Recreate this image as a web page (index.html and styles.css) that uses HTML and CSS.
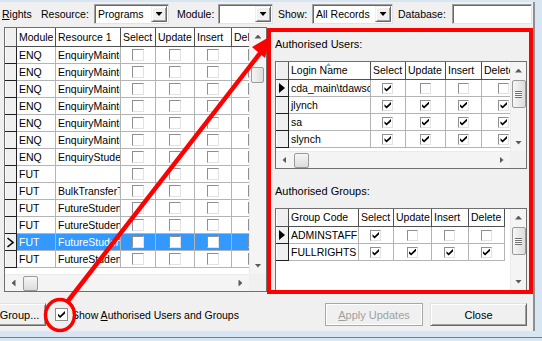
FILE: index.html
```html
<!DOCTYPE html>
<html>
<head>
<meta charset="utf-8">
<title>Rights</title>
<link rel="stylesheet" href="styles.css">
</head>
<body>
<div class="window">
  <div class="toolbar">
    <span class="lbl w-rights"><u>R</u>ights</span>
    <span class="lbl w-res">Resource:</span>
    <div class="combo w-prog"><span class="ctext">Programs</span><span class="cbtn"></span></div>
    <span class="lbl w-mod">Module:</span>
    <div class="combo w-modc"><span class="ctext"></span><span class="cbtn"></span></div>
    <span class="lbl w-show">Show:</span>
    <div class="combo w-showc"><span class="ctext">All Records</span><span class="cbtn"></span></div>
    <span class="lbl w-db">Database:</span>
    <div class="textbox w-dbt"></div>
  </div>

  <div class="main">
    <div class="grid lgrid">
      <div class="gbody">
        <div class="gtable">
          <div class="grow ghead lh lcols"><div class="c sel"></div><div class="c">Module</div><div class="c">Resource 1</div><div class="c">Select</div><div class="c">Update</div><div class="c">Insert</div><div class="c">Delete</div></div>
          <div class="grow lcols"><div class="c sel"></div><div class="c">ENQ</div><div class="c">EnquiryMaintenance</div><div class="c ck"><i class="cb"></i></div><div class="c ck"><i class="cb"></i></div><div class="c ck"><i class="cb"></i></div><div class="c ck"><i class="cb"></i></div></div>
          <div class="grow lcols"><div class="c sel"></div><div class="c">ENQ</div><div class="c">EnquiryMaintenance</div><div class="c ck"><i class="cb"></i></div><div class="c ck"><i class="cb"></i></div><div class="c ck"><i class="cb"></i></div><div class="c ck"><i class="cb"></i></div></div>
          <div class="grow lcols"><div class="c sel"></div><div class="c">ENQ</div><div class="c">EnquiryMaintenance</div><div class="c ck"><i class="cb"></i></div><div class="c ck"><i class="cb"></i></div><div class="c ck"><i class="cb"></i></div><div class="c ck"><i class="cb"></i></div></div>
          <div class="grow lcols"><div class="c sel"></div><div class="c">ENQ</div><div class="c">EnquiryMaintenance</div><div class="c ck"><i class="cb"></i></div><div class="c ck"><i class="cb"></i></div><div class="c ck"><i class="cb"></i></div><div class="c ck"><i class="cb"></i></div></div>
          <div class="grow lcols"><div class="c sel"></div><div class="c">ENQ</div><div class="c">EnquiryMaintenance</div><div class="c ck"><i class="cb"></i></div><div class="c ck"><i class="cb"></i></div><div class="c ck"><i class="cb"></i></div><div class="c ck"><i class="cb"></i></div></div>
          <div class="grow lcols"><div class="c sel"></div><div class="c">ENQ</div><div class="c">EnquiryMaintenance</div><div class="c ck"><i class="cb"></i></div><div class="c ck"><i class="cb"></i></div><div class="c ck"><i class="cb"></i></div><div class="c ck"><i class="cb"></i></div></div>
          <div class="grow lcols"><div class="c sel"></div><div class="c">ENQ</div><div class="c">EnquiryStudent</div><div class="c ck"><i class="cb"></i></div><div class="c ck"><i class="cb"></i></div><div class="c ck"><i class="cb"></i></div><div class="c ck"><i class="cb"></i></div></div>
          <div class="grow lcols"><div class="c sel"></div><div class="c">FUT</div><div class="c"></div><div class="c ck"><i class="cb"></i></div><div class="c ck"><i class="cb"></i></div><div class="c ck"><i class="cb"></i></div><div class="c ck"><i class="cb"></i></div></div>
          <div class="grow lcols"><div class="c sel"></div><div class="c">FUT</div><div class="c">BulkTransferTool</div><div class="c ck"><i class="cb"></i></div><div class="c ck"><i class="cb"></i></div><div class="c ck"><i class="cb"></i></div><div class="c ck"><i class="cb"></i></div></div>
          <div class="grow lcols"><div class="c sel"></div><div class="c">FUT</div><div class="c">FutureStudent</div><div class="c ck"><i class="cb"></i></div><div class="c ck"><i class="cb"></i></div><div class="c ck"><i class="cb"></i></div><div class="c ck"><i class="cb"></i></div></div>
          <div class="grow lcols"><div class="c sel"></div><div class="c">FUT</div><div class="c">FutureStudent</div><div class="c ck"><i class="cb"></i></div><div class="c ck"><i class="cb"></i></div><div class="c ck"><i class="cb"></i></div><div class="c ck"><i class="cb"></i></div></div>
          <div class="grow lcols cur"><div class="c sel"><svg class="chev" width="9" height="11" viewBox="0 0 9 11"><path d="M1.5 1 L7 5.5 L1.5 10" fill="none" stroke="#000" stroke-width="1.6"/></svg></div><div class="c">FUT</div><div class="c">FutureStudent</div><div class="c ck"><i class="cb"></i></div><div class="c ck"><i class="cb"></i></div><div class="c ck"><i class="cb"></i></div><div class="c ck"><i class="cb"></i></div></div>
          <div class="grow lcols"><div class="c sel"></div><div class="c">FUT</div><div class="c">FutureStudent</div><div class="c ck"><i class="cb"></i></div><div class="c ck"><i class="cb"></i></div><div class="c ck"><i class="cb"></i></div><div class="c ck"><i class="cb"></i></div></div>
        </div>
        <div class="vscroll"><span class="sa up"></span><span class="thumb lthumb"></span><span class="fill"></span><span class="sa dn"></span></div>
      </div>
      <div class="hbar">
        <div class="hscroll"><span class="sa lt"></span><span class="hthumb"></span><span class="fill"></span><span class="sa rt"></span></div>
        <div class="corner"></div>
      </div>
    </div>

    <div class="panel">
      <div class="plabel">Authorised Users:</div>
      <div class="grid ugrid">
        <div class="gbody">
          <div class="gtable">
            <div class="grow ghead ucols"><div class="c sel"></div><div class="c sorted">Login Name<i class="sortglyph"></i></div><div class="c">Select</div><div class="c">Update</div><div class="c">Insert</div><div class="c">Delete</div></div>
            <div class="grow ucols"><div class="c sel"><i class="tri"></i></div><div class="c">cda_main\tdawson</div><div class="c ck"><i class="cb s on"></i></div><div class="c ck"><i class="cb s"></i></div><div class="c ck"><i class="cb s"></i></div><div class="c ck"><i class="cb s"></i></div></div>
            <div class="grow ucols"><div class="c sel"></div><div class="c">jlynch</div><div class="c ck"><i class="cb s on"></i></div><div class="c ck"><i class="cb s on"></i></div><div class="c ck"><i class="cb s on"></i></div><div class="c ck"><i class="cb s on"></i></div></div>
            <div class="grow ucols"><div class="c sel"></div><div class="c">sa</div><div class="c ck"><i class="cb s on"></i></div><div class="c ck"><i class="cb s on"></i></div><div class="c ck"><i class="cb s on"></i></div><div class="c ck"><i class="cb s on"></i></div></div>
            <div class="grow ucols"><div class="c sel"></div><div class="c">slynch</div><div class="c ck"><i class="cb s on"></i></div><div class="c ck"><i class="cb s on"></i></div><div class="c ck"><i class="cb s on"></i></div><div class="c ck"><i class="cb s on"></i></div></div>
          </div>
          <div class="vscroll narrow"><span class="sa up"></span><span class="thumb gthumb"></span><span class="fill"></span><span class="sa dn"></span></div>
        </div>
        <div class="hbar">
          <div class="hscroll"><span class="sa lt"></span><span class="hthumb"></span><span class="fill"></span><span class="sa rt"></span></div>
          <div class="corner narrow"></div>
        </div>
      </div>

      <div class="plabel glabel">Authorised Groups:</div>
      <div class="grid ggrid">
        <div class="gbody">
          <div class="gtable">
            <div class="grow ghead gcols"><div class="c sel"></div><div class="c">Group Code</div><div class="c">Select</div><div class="c">Update</div><div class="c">Insert</div><div class="c">Delete</div></div>
            <div class="grow gcols"><div class="c sel"><i class="tri"></i></div><div class="c">ADMINSTAFF</div><div class="c ck"><i class="cb s on"></i></div><div class="c ck"><i class="cb s"></i></div><div class="c ck"><i class="cb s"></i></div><div class="c ck"><i class="cb s"></i></div></div>
            <div class="grow gcols"><div class="c sel"></div><div class="c">FULLRIGHTS</div><div class="c ck"><i class="cb s on"></i></div><div class="c ck"><i class="cb s on"></i></div><div class="c ck"><i class="cb s on"></i></div><div class="c ck"><i class="cb s on"></i></div></div>
          </div>
          <div class="vscroll narrow"><span class="sa up"></span><span class="thumb gthumb"></span><span class="fill"></span><span class="sa dn"></span></div>
        </div>
      </div>
    </div>
  </div>

  <div class="footer">
    <div class="btn raised w-group">Group...</div>
    <i class="cb big on"></i>
    <span class="chklabel">Show <u>A</u>uthorised Users and Groups</span>
    <div class="btn flat disabled w-apply"><span><u>A</u>pply Updates</span></div>
    <div class="btn raised w-close">Close</div>
  </div>
</div>
<div class="frame-bottom"></div>

<svg class="annot" width="542" height="341" viewBox="0 0 542 341">
  <ellipse cx="60" cy="315" rx="14.5" ry="15.5" fill="none" stroke="#ff0000" stroke-width="3.5"/>
  <line x1="68" y1="301" x2="261" y2="52" stroke="#ff0000" stroke-width="4.5"/>
  <polygon points="271,36 252,47 265,58" fill="#ff0000"/>
</svg>
</body>
</html>
```

FILE: styles.css
```css
* { box-sizing: border-box; }
html, body { margin: 0; padding: 0; }
body {
  width: 542px; height: 341px; overflow: hidden; position: relative;
  background: #d8e5f3;
  font-family: "Liberation Sans", Arial, sans-serif; font-size: 10.5px; color: #000;
}
.window {
  margin-top: 2px; width: 535px; height: 329px;
  background: #f0f0f0; border-right: 2px solid #8e8f8f;
  display: flex; flex-direction: column;
}
.frame-bottom { margin-top: 6px; height: 1px; background: #7a7a7a; }

/* toolbar */
.toolbar { display: flex; align-items: flex-start; height: 20px; margin-top: 2px; padding-left: 2px; }
.lbl { line-height: 20px; white-space: nowrap; }
.w-rights { width: 39px; }
.w-res { width: 53px; }
.w-mod { margin-left: 8px; width: 41px; }
.w-show { margin-left: 5px; width: 34px; }
.w-db { margin-left: 5px; width: 54px; }
.combo, .textbox {
  height: 20px; background: #fff; border: 1px solid;
  border-color: #a0a0a0 #e3e3e3 #e3e3e3 #a0a0a0;
  box-shadow: inset 1px 1px 0 #696969;
}
.combo { display: flex; }
.w-prog { width: 75px; }
.w-modc { width: 55px; }
.w-showc { width: 81px; }
.w-dbt { width: 80px; }
.ctext { flex: 1; padding: 1px 0 0 3px; line-height: 17px; white-space: nowrap; overflow: hidden; }
.cbtn {
  width: 16px; margin: 1px 1px 1px 0; background: #f0f0f0; border: 1px solid;
  border-color: #f0f0f0 #696969 #696969 #f0f0f0;
  box-shadow: inset 1px 1px 0 #fff, inset -1px -1px 0 #a0a0a0;
  display: flex; align-items: center; justify-content: center;
}
.cbtn::before { content: ""; width: 7px; height: 4px; background: #000; clip-path: polygon(0 0, 100% 0, 50% 100%); }

/* layout */
.main { display: flex; align-items: flex-start; height: 267px; margin-top: 3px; }

/* grids */
.grid { background: #fff; border: 1px solid #6f6f6f; display: flex; flex-direction: column; overflow: hidden; }
.lgrid { margin-left: 4px; width: 264px; height: 265px; }
.gbody { display: flex; flex: 1; min-height: 0; }
.gtable { flex: 1; min-width: 0; overflow: hidden; background: #fff; }
.grow { display: grid; width: max-content; }
.lcols { grid-template-columns: 12px 39px 65px 35px 39px 37px 45px; }
.ucols { grid-template-columns: 13px 82px 35px 40px 36px 45px; }
.gcols { grid-template-columns: 13px 70px 35px 38px 37px 36px; }
.c {
  height: 17px; line-height: 16px; padding-left: 2px;
  border-right: 1px solid #b4b4b4; border-bottom: 1px solid #b4b4b4;
  white-space: nowrap; overflow: hidden;
}
.ck { display: flex; align-items: center; justify-content: center; padding: 0; }
.ghead .c { height: 18px; line-height: 17px; background: #fff; border-color: #505050; }
.ghead.lh .c { height: 19px; line-height: 18px; }
.sel {
  padding: 0; background: #f0f0f0;
  border-right-color: #202020; border-bottom-color: #202020;
  box-shadow: inset 1px 0 0 #fff;
  display: flex; align-items: center; justify-content: center;
}
.ghead .c.sel { background: #f0f0f0; }
.cur .c:not(.sel) { background: #3399ff; color: #fff; }
.chev { display: block; }
.tri { width: 6px; height: 10px; background: #000; clip-path: polygon(0 0, 100% 50%, 0 100%); }
.sorted { position: relative; }
.sortglyph {
  position: absolute; left: 37px; top: 1px; width: 5px; height: 3px;
  background: #8fa4c4; clip-path: polygon(50% 0, 100% 100%, 0 100%);
}

/* checkboxes */
.cb {
  position: relative; display: block; width: 12px; height: 12px; background: #fff;
  border: 1px solid; border-color: #8f8f8f #e2e2e2 #e2e2e2 #8f8f8f;
}
.cb.s { width: 11px; height: 11px; }
.cb.on::after {
  content: ""; position: absolute; left: 1px; top: 1px; width: 7px; height: 7px; background: #000;
  clip-path: polygon(0 38%, 30% 68%, 100% 0, 100% 34%, 30% 100%, 0 70%);
}
.cb.big { width: 13px; height: 13px; margin-left: 9px; border-color: #8f8f8f; }
.cb.big::after { left: 2px; top: 2px; }

/* scrollbars */
.vscroll {
  width: 17px; flex: none; background: #f4f4f4; border-left: 1px solid #ebebeb;
  display: flex; flex-direction: column; align-items: center;
}
.vscroll.narrow { width: 16px; }
.hbar { display: flex; height: 17px; flex: none; }
.hscroll { flex: 1; display: flex; background: #f4f4f4; border-top: 1px solid #ebebeb; }
.corner { width: 17px; background: #f0f0f0; }
.corner.narrow { width: 16px; }
.fill { flex: 1; }
.sa { flex: none; display: flex; align-items: center; justify-content: center; }
.vscroll .sa { width: 100%; height: 17px; }
.hscroll .sa { width: 17px; height: 100%; }
.sa::before { content: ""; background: #5a5a5a; }
.sa.up::before { width: 7px; height: 4px; clip-path: polygon(50% 0, 100% 100%, 0 100%); }
.sa.dn::before { width: 7px; height: 4px; clip-path: polygon(0 0, 100% 0, 50% 100%); }
.sa.lt::before { width: 4px; height: 7px; clip-path: polygon(100% 0, 100% 100%, 0 50%); }
.sa.rt::before { width: 4px; height: 7px; clip-path: polygon(0 0, 100% 50%, 0 100%); }
.thumb {
  flex: none; border: 1px solid #9a9a9a; border-radius: 2px;
  background: linear-gradient(to right, #f6f6f6, #dcdcdc);
  display: flex; align-items: center; justify-content: center;
}
.lthumb { width: 13px; height: 16px; margin-top: 22px; }
.gthumb { width: 14px; height: 28px; margin-top: 1px; }
.gthumb::after {
  content: ""; width: 7px; height: 7px;
  background: repeating-linear-gradient(#6f6f6f 0 1px, #fafafa 1px 2px);
}
.hthumb {
  flex: none; width: 15px; margin: 1px 0 0 1px; height: 15px;
  border: 1px solid #9a9a9a; border-radius: 2px;
  background: linear-gradient(#f6f6f6, #dcdcdc);
}

/* right panel */
.panel {
  margin-top: 1px; width: 267px; height: 266px;
  border: 4px solid #ff0000; background: #f0f0f0;
  padding: 6px 2px 0 4px; overflow: hidden;
}
.plabel { height: 13px; line-height: 13px; white-space: nowrap; font-size: 11px; }
.ugrid { margin-top: 10px; height: 108px; }
.glabel { margin-top: 16px; }
.ggrid { margin-top: 10px; height: 83px; }

/* footer */
.footer { display: flex; align-items: center; height: 23px; margin-top: 9px; }
.btn { height: 23px; display: flex; align-items: center; justify-content: center; background: #f0f0f0; white-space: nowrap; font-size: 11px; }
.raised {
  border: 1px solid; border-color: #e3e3e3 #696969 #696969 #e3e3e3;
  box-shadow: inset 1px 1px 0 #fff, inset -1px -1px 0 #a0a0a0;
}
.flat { border: 1px solid #a8a8a8; box-shadow: inset 1px 1px 0 #fff, inset -1px -1px 0 #fff; }
.disabled { color: #a0a0a0; }
.w-group { margin-left: -29px; width: 75px; padding-left: 22px; }
.chklabel { margin-left: 4px; white-space: nowrap; }
.w-apply { margin-left: auto; width: 98px; }
.w-close { margin-left: 7px; width: 97px; margin-right: 6px; }

/* annotation overlay */
.annot { position: absolute; left: 0; top: 0; pointer-events: none; }
```
